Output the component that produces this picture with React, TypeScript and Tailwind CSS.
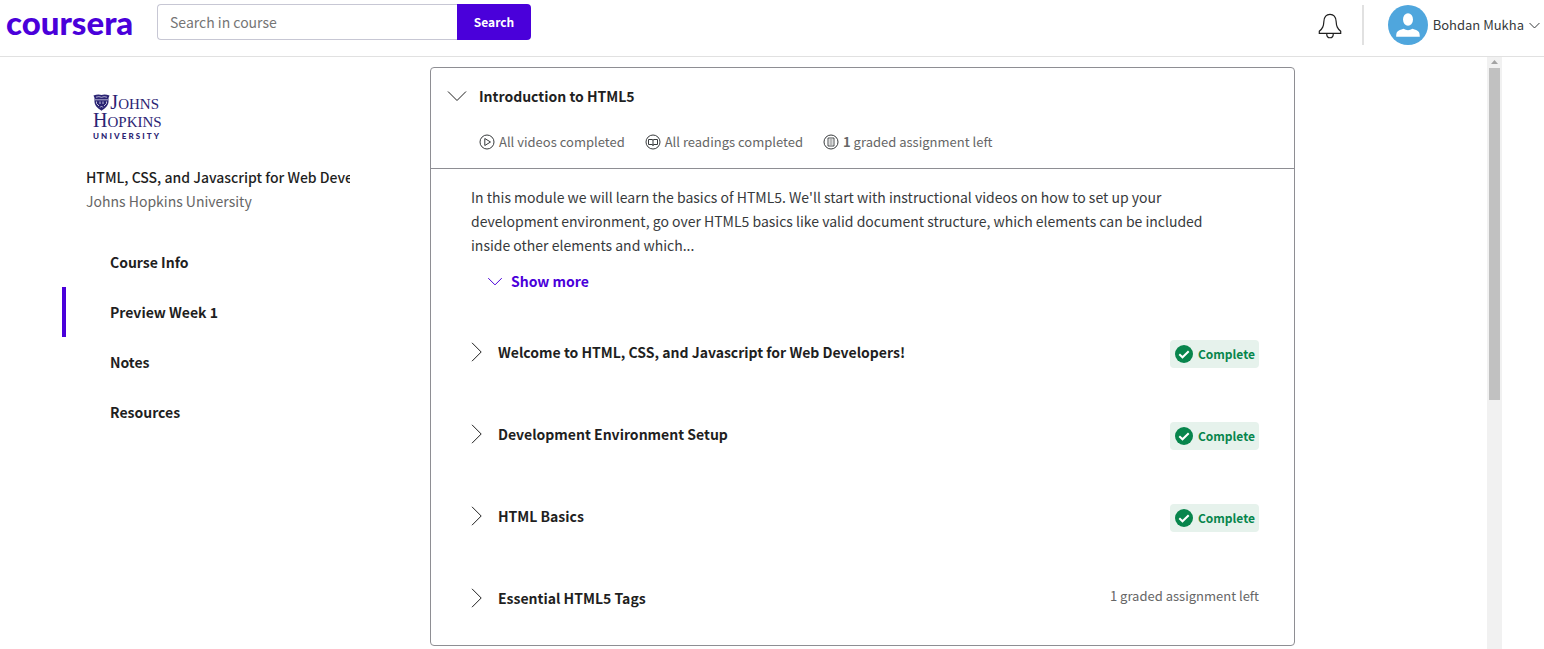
import React from 'react';

type IconProps = { className?: string };

const ChevronDown = ({ className }: IconProps) => (
  <svg viewBox="0 0 20 12" fill="none" stroke="currentColor" className={className} aria-hidden="true">
    <path d="M1 1.5 10 10.5 19 1.5" vectorEffect="non-scaling-stroke" />
  </svg>
);

const ChevronRight = ({ className }: IconProps) => (
  <svg viewBox="0 0 12 20" fill="none" stroke="currentColor" className={className} aria-hidden="true">
    <path d="M1 .8 10.200 10 1 19.200" vectorEffect="non-scaling-stroke" />
  </svg>
);

const Bell = () => (
  <svg viewBox="0 0 24 26" fill="none" stroke="#1f1f1f" strokeWidth="1.2" className="h-[26px] w-6" aria-hidden="true">
    <path d="M1.3 20.4V18.3C4.600 15.300 5.600 13.500 5.900 8.300C6.200 3.700 8.700 1.300 12 1.300S17.800 3.700 18.100 8.300C18.400 13.500 19.400 15.300 22.700 18.300V20.400Z" />
    <path d="M8.700 20.400C8.700 26.200 15.300 26.200 15.300 20.400" />
  </svg>
);

const Avatar = () => (
  <svg viewBox="0 0 40 40" className="size-10" aria-hidden="true">
    <circle cx="20" cy="20" r="20" fill="#4fa6dd" />
    <ellipse cx="20" cy="14.500" rx="5" ry="6.200" fill="#fff" />
    <path d="M8.200 31.700C8.200 26.500 9.500 25.700 15.500 23.800Q20 26.500 24.500 23.800C30.500 25.700 31.800 26.500 31.800 31.700Z" fill="#fff" />
  </svg>
);

const VideoIcon = () => (
  <svg viewBox="0 0 16 16" fill="none" stroke="#373a3c" className="size-4" aria-hidden="true">
    <circle cx="8" cy="8" r="7" />
    <path d="M5.800 4.500 11.500 8 5.800 11.500Z" />
  </svg>
);

const ReadingIcon = () => (
  <svg viewBox="0 0 16 16" fill="none" stroke="#373a3c" className="size-4" aria-hidden="true">
    <circle cx="8" cy="8" r="7" />
    <path d="M3.500 5.500H7L8 6 9 5.500H12.500V10.500H9L8 11.200 7 10.500H3.500ZM8 6V12" />
  </svg>
);

const AssignmentIcon = () => (
  <svg viewBox="0 0 16 16" fill="none" stroke="#373a3c" className="size-4" aria-hidden="true">
    <circle cx="8" cy="8" r="7" />
    <path d="M5 4H11V12H5Z" strokeWidth=".9" />
    <path d="M6.500 6H9.500M6.500 8H9.500M6.500 10H9.500" strokeWidth=".7" />
  </svg>
);

const CheckIcon = () => (
  <svg viewBox="0 0 18 18" className="size-[18px]" aria-hidden="true">
    <circle cx="9" cy="9" r="9" fill="#07854c" />
    <path d="M4.300 9.300 7.500 12.300 13.700 6.200" fill="none" stroke="#fff" strokeWidth="2" />
  </svg>
);

const Shield = () => (
  <svg viewBox="0 0 17 17" className="size-[17px]" aria-hidden="true">
    <path d="M.5 1.500Q5 0 8.500 1Q12 0 16.500 1.500L15.500 4V8C15 12 12 14.500 8.500 16.700C5 14.500 2 12 1.500 8V4Z" fill="#2b2473" />
    <path d="M3 3.200Q6 2 8.500 3.300Q11 2 14 3.200M2 5.800H15" stroke="#d5d3e8" fill="none" strokeWidth=".8" />
    <path d="M3.500 7.500V9.500L6 12M7 7.500V10M10 7.500V10M13.500 7.500V9.500L11 12M7.200 13.500 8.500 12 9.800 13.500" stroke="#c5c2df" fill="none" />
  </svg>
);

const CompleteBadge = () => (
  <span className="mt-1 flex h-7 items-center gap-[5px] rounded bg-[#e6f2ec] pr-1 pl-[5px] text-[12px] font-bold text-[#07854c]">
    <CheckIcon />
    Complete
  </span>
);

const navItems = ['Course Info', 'Preview Week 1', 'Notes', 'Resources'];

const lessons = [
  { title: 'Welcome to HTML, CSS, and Javascript for Web Developers!', complete: true },
  { title: 'Development Environment Setup', complete: true },
  { title: 'HTML Basics', complete: true },
  { title: 'Essential HTML5 Tags', complete: false },
];

export default function App() {
  return (
    <div className="flex min-h-screen flex-col bg-white font-['Noto_Sans_CJK_SC',sans-serif] text-[14px] leading-6 text-[#1f1f1f]">
      <header className="flex h-[57px] items-start justify-between border-b border-[#e1e1e1] pr-1 pl-1.5">
        <div className="flex pt-1">
          <a href="#" className="w-[151px] font-['Lato',sans-serif] text-[33px] leading-9 font-black text-[#4a00da]">
            coursera
          </a>
          <form className="flex h-9" onSubmit={(e) => e.preventDefault()}>
            <input
              type="text"
              aria-label="Search in course"
              placeholder="Search in course"
              className="w-[300px] rounded-l border border-r-0 border-[#c7c7d4] px-3 outline-none placeholder:text-[#757575]"
            />
            <button type="submit" className="w-[74px] rounded-r-sm bg-[#4a00da] text-[12px] font-bold text-white">
              Search
            </button>
          </form>
        </div>
        <div className="flex items-center pt-[5px]">
          <button type="button" aria-label="Notifications" className="mt-0.5 mr-5">
            <Bell />
          </button>
          <button type="button" className="flex items-center border-l-2 border-[#e1e1e1] pl-6 text-[#373a3c]">
            <Avatar />
            <span className="mr-[5px] ml-[5px] text-[13px]">Bohdan Mukha</span>
            <ChevronDown className="h-[7px] w-[11px]" />
          </button>
        </div>
      </header>

      <div className="flex flex-1">
        <aside className="w-[350px] shrink-0 pt-9 pl-[62px]">
          <div className="pl-6">
            <div className="mb-6 ml-[7px] flex h-12 w-[66px] flex-col font-['Liberation_Serif',serif] text-[#2b2473]">
              <div className="flex h-[19px] items-center justify-between text-[15px] leading-4">
                <Shield />
                <span>
                  <span className="text-[20px]">J</span>OHNS
                </span>
              </div>
              <div className="h-[19px] text-[15px] leading-4">
                <span className="text-[20px]">H</span>OPKINS
              </div>
              <div className="flex justify-between font-['Lato',sans-serif] text-[8px] leading-[10px] font-black">
                {'UNIVERSITY'.split('').map((letter, i) => (
                  <span key={i}>{letter}</span>
                ))}
              </div>
            </div>
            <h1 className="overflow-hidden font-medium whitespace-nowrap">HTML, CSS, and Javascript for Web Developers</h1>
            <p className="text-[#666]">Johns Hopkins University</p>
          </div>
          <nav className="mt-6 flex flex-col">
            {navItems.map((item) => (
              <a
                key={item}
                href="#"
                className={
                  item === 'Preview Week 1'
                    ? 'flex h-[50px] items-center border-l-4 border-[#4a00da] pl-11 font-bold'
                    : 'flex h-[50px] items-center border-l-4 border-transparent pl-11 font-bold'
                }
              >
                {item}
              </a>
            ))}
          </nav>
        </aside>

        <main className="min-w-0 flex-1 pt-2.5 pr-48 pb-[3px] pl-20">
          <section className="rounded border border-[#8e8e93]">
            <div className="border-b border-[#8e8e93] px-4 pt-4 pb-3.5">
              <button type="button" className="flex items-center gap-3 text-left">
                <ChevronDown className="h-3 w-5" />
                <span className="font-bold">Introduction to HTML5</span>
              </button>
              <ul className="mt-[22px] ml-8 flex gap-5 text-[13px] text-[#666]">
                <li className="flex items-center gap-1">
                  <VideoIcon />
                  All videos completed
                </li>
                <li className="flex items-center gap-1">
                  <ReadingIcon />
                  All readings completed
                </li>
                <li className="flex items-center gap-1">
                  <AssignmentIcon />
                  <span>
                    <b>1</b> graded assignment left
                  </span>
                </li>
              </ul>
            </div>
            <div className="pt-4 pr-[35px] pb-1.5 pl-10">
              <p className="max-w-[760px] text-[#373a3c]">
                In this module we will learn the basics of HTML5. We'll start with instructional videos on how to set up your
                development environment, go over HTML5 basics like valid document structure, which elements can be included
                inside other elements and which...
              </p>
              <button type="button" className="mt-3 ml-4 flex items-center gap-2 font-bold text-[#4a00da]">
                <ChevronDown className="h-[9px] w-4" />
                Show more
              </button>
              <ul className="mt-[18px]">
                {lessons.map((lesson) => (
                  <li key={lesson.title} className="flex h-[82px] items-center justify-between">
                    <button type="button" className="flex items-center gap-[15px] text-left font-bold">
                      <ChevronRight className="h-5 w-3" />
                      {lesson.title}
                    </button>
                    {lesson.complete ? (
                      <CompleteBadge />
                    ) : (
                      <span className="mb-1 text-[13px] text-[#666]">1 graded assignment left</span>
                    )}
                  </li>
                ))}
              </ul>
            </div>
          </section>
        </main>

        <div className="mr-[42px] flex w-[15px] shrink-0 flex-col items-center bg-[#f1f1f1]" aria-hidden="true">
          <svg viewBox="0 0 7 4" className="mt-[3px] mb-1 h-1 w-[7px] shrink-0">
            <path d="M0 4 3.500 0 7 4Z" fill="#a3a3a3" />
          </svg>
          <div className="h-[332px] w-[11px] bg-[#c1c1c1]" />
        </div>
      </div>
    </div>
  );
}
